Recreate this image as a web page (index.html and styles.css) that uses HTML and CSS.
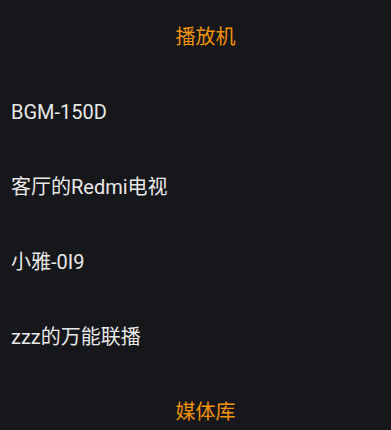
FILE: index.html
```html
<!DOCTYPE html>
<html>
<head lang="zh">
  <meta charset="UTF-8">
  <title>播放机</title>
  <link rel="stylesheet" href="styles.css">
</head>
<body>
<div class="device-list">
  <div class="group-title">播放机</div>
  <div class="device-item">BGM-150D</div>
  <div class="device-item">客厅的Redmi电视</div>
  <div class="device-item">小雅-0I9</div>
  <div class="device-item">zzz的万能联播</div>
  <div class="group-title">媒体库</div>
</div>
</body>
</html>
```

FILE: styles.css
```css
html, body {
  margin: 0px;
  padding: 0px;
  background: #16171a;
}

.device-list {
  font-family: Roboto, "Noto Sans CJK SC", sans-serif;
  font-size: 20px;
}

.group-title {
  height: 75px;
  line-height: 75px;
  text-align: center;
  padding-left: 20px;
  color: #f2930e;
}

.device-item {
  height: 75px;
  line-height: 75px;
  padding-left: 11px;
  color: #e8e8e8;
}
```
